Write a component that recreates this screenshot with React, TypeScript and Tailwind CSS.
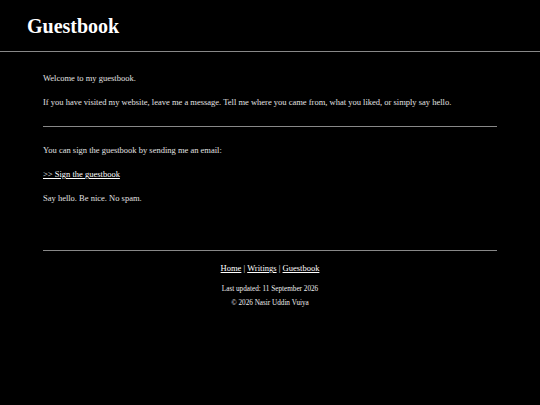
// Pagina do guestbook - tudo em Times (Liberation Serif)
export default function App() {
  return (
    <div className="min-h-[405px] bg-black text-[#e0e0e0] font-['Liberation_Serif',serif]">
      {/* Cabecalho com titulo */}
      <header className="h-[52px] border-b border-[#888] pl-[27px] pt-[13px]">
        <h1 className="text-[20px] leading-[26px] font-bold text-white">Guestbook</h1>
      </header>

      <main className="px-[43px] pt-[20px]">
        <p className="text-[8.5px] leading-[12px]">Welcome to my guestbook.</p>
        <p className="text-[8.5px] leading-[12px] mt-[12px]">
          If you have visited my website, leave me a message. Tell me where you came from, what you liked, or simply say hello.
        </p>

        <hr className="mt-[18px] border-t border-[#888]" />

        <p className="text-[8.5px] leading-[12px] mt-[17px]">You can sign the guestbook by sending me an email:</p>
        <p className="text-[8.5px] leading-[12px] mt-[12px]">
          <a href="#" className="underline text-white">&gt;&gt; Sign the guestbook</a>
        </p>
        <p className="text-[8.5px] leading-[12px] mt-[12px]">Say hello. Be nice. No spam.</p>

        {/* Rodape */}
        <footer className="mt-[46px] border-t border-[#888] pt-[11px] text-center">
          <nav className="text-[8.5px] leading-[12px]">
            <a href="#" className="underline text-white">Home</a> |{" "}
            <a href="#" className="underline text-white">Writings</a> |{" "}
            <a href="#" className="underline text-white">Guestbook</a>
          </nav>
          <p className="text-[7.2px] leading-[10px] mt-[10px] text-[#eee]">Last updated: 11 September 2026</p>
          <p className="text-[7.2px] leading-[10px] mt-[4px] text-[#eee]">© 2026 Nasir Uddin Vuiya</p>
        </footer>
      </main>
    </div>
  );
}
